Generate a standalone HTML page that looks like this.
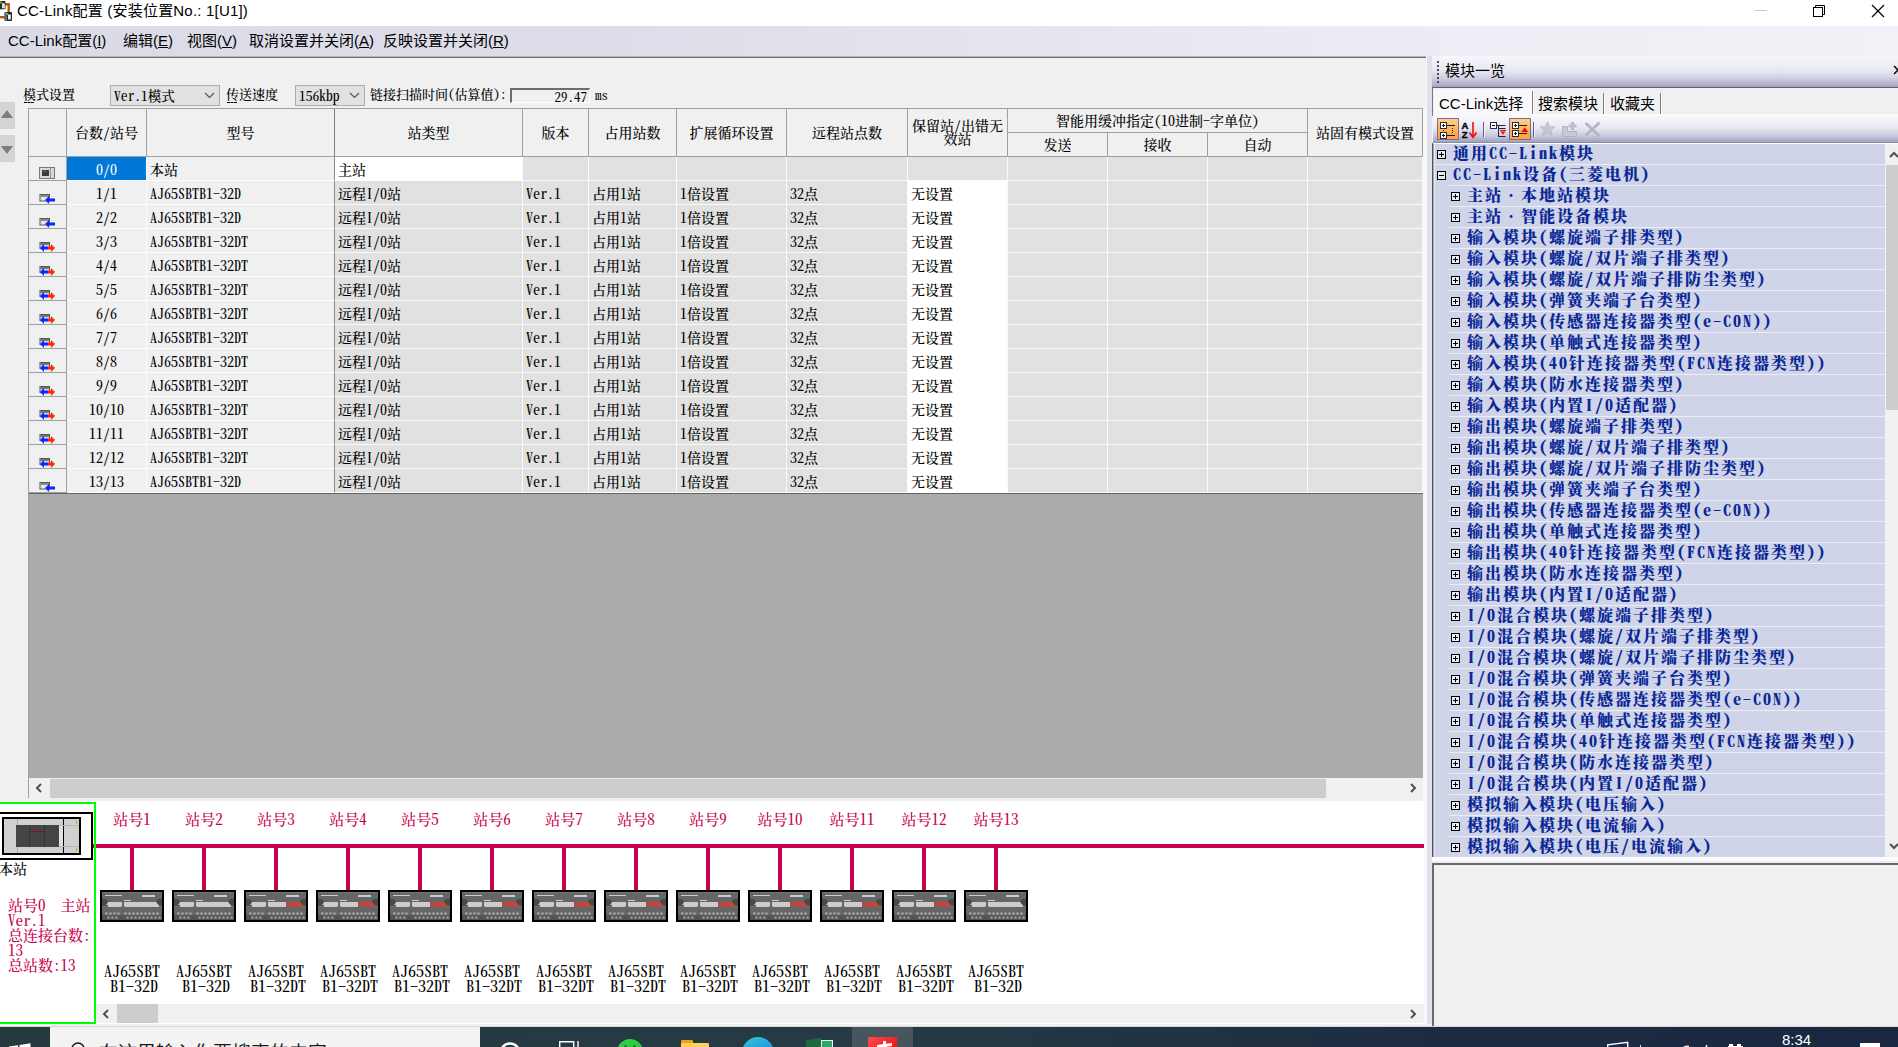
<!DOCTYPE html><html lang="zh-CN"><head><meta charset="utf-8"><title>CC-Link配置</title><style>
*{box-sizing:border-box;margin:0;padding:0}
html,body{width:1898px;height:1047px;overflow:hidden;background:#f0f0f0}
body{position:relative;font-family:"Liberation Sans","Noto Sans CJK SC",sans-serif;font-size:15px;color:#000}
.a{position:absolute}
.ui{font-family:"Liberation Sans","Noto Sans CJK SC",sans-serif;font-size:15px;white-space:nowrap}
.s{font-family:"Noto Serif CJK SC","Liberation Serif",serif;font-feature-settings:"hwid";white-space:nowrap;font-weight:500}
u{text-decoration:underline;text-underline-offset:1px}
u.d{text-decoration:none;position:relative;display:inline-block;line-height:16px;vertical-align:top}
u.d:after{content:"";position:absolute;left:1px;top:16px;width:10px;height:0;border-top:1px dashed #000}
#title{left:0;top:0;width:1898px;height:26px;background:#fff}
#menu{left:0;top:26px;width:1898px;height:30px;background:linear-gradient(90deg,#dbdbe8 0,#dddde9 600px,#ececf4 1400px,#f1f1f7 1898px)}
#menu span{position:absolute;top:5px;line-height:20px}
#lp{left:0;top:56px;width:1426px;height:971px;background:#f0f0f0}
.cmb{height:21px;border:1px solid #adadad;background:#e1e1e1;font-size:13.5px;line-height:19px;padding-left:3px}
.lbl{font-size:13px;line-height:16px}
.hc{position:absolute;background:#f0f0f0;border-right:1px solid #a0a0a0;border-bottom:1px solid #a0a0a0;font-size:14px;text-align:center;display:flex;align-items:center;justify-content:center;padding-bottom:2px}
.row{position:absolute;left:28px;width:1395px;height:24px;font-size:14px;line-height:25px}
.c{position:absolute;top:0;height:24px;border-bottom:1px solid #fafafa;border-right:1px solid #fafafa;background:#e1e1e1;padding-left:3px;overflow:hidden}
.c.f{background:#f0f0f0;border-color:#fbfbfb}
.c.w{background:#fff;border-bottom-color:#fff}
.c.i{background:#f0f0f0;border-color:#a0a0a0;border-left:1px solid #a0a0a0;padding:0}
.c.sel{background:#0078d7;color:#fff;border-color:#fbfbfb}
.c.k{border-right-color:#8c8c8c}
.cen{text-align:center;padding-left:0}
.tr{position:absolute;left:0;width:450px;height:21px;font-size:16px;font-weight:900;letter-spacing:2px;color:#0a2896;line-height:20px}
.tr b{position:absolute;top:6px;width:9px;height:9px;border:1px solid #000;background:#e8eaf6}
.tr b:before{content:"";position:absolute;left:1px;top:3px;width:5px;height:1px;background:#000}
.tr b.p:after{content:"";position:absolute;left:3px;top:1px;width:1px;height:5px;background:#000}
.tr i{position:absolute;top:-1px;font-style:normal}
.tr i em{font-style:normal;font-weight:400}
.tr s{position:absolute;top:-1px;right:0;height:1px;background:#eceef5}
.st{position:absolute;top:811px;width:72px;text-align:center;font-size:15px;line-height:15px;color:#c8004f}
.mn{position:absolute;top:963px;width:72px;text-align:center;font-size:16px;line-height:15px;color:#000;white-space:pre}
.mn span{position:relative;left:2px}
.dr{position:absolute;top:848px;width:4px;height:42px;background:#c80050}
</style></head><body>
<div id="title" class="a">
<svg class="a" style="left:0;top:0" width="14" height="24" viewBox="0 0 14 24"><path d="M5 4.200H8.700V12.500" fill="none" stroke="#b85a0a" stroke-width="2.400"/><path d="M0 17.200H5" stroke="#b85a0a" stroke-width="2.400"/><rect x="-1" y="1" width="6.500" height="8.200" rx=".8" fill="#2a2a2a"/><rect x="2" y="3.300" width="2.800" height="5" fill="#e8e8e8"/><rect x="0" y="1.500" width="1.800" height="2" fill="#5cd01a"/><rect x="4.600" y="12" width="7.400" height="9" rx=".8" fill="#2a2a2a"/><rect x="4.600" y="12" width="2.400" height="9" fill="#6a6a6a"/><rect x="8" y="14.500" width="2.800" height="5" fill="#f4f4f4"/><rect x="6.800" y="13" width="1.200" height="2" fill="#5cd01a"/></svg>
<div class="a ui" style="left:17px;top:0px;line-height:21px;letter-spacing:.2px">CC-Link配置 (安装位置No.: 1[U1])</div>
<div class="a" style="left:1755px;top:10px;width:12px;height:1px;background:#c8c8c8"></div>
<svg class="a" style="left:1812px;top:4px" width="14" height="14" viewBox="0 0 14 14"><path d="M3.500 3.500V1.500h9v9h-2" fill="none" stroke="#000" stroke-width="1"/><rect x="1.5" y="3.5" width="9" height="9" fill="none" stroke="#000" stroke-width="1"/></svg>
<svg class="a" style="left:1871px;top:4px" width="14" height="14" viewBox="0 0 14 14"><path d="M1 1l12 12M13 1L1 13" stroke="#000" stroke-width="1.2" fill="none"/></svg>
</div>
<div id="menu" class="a ui">
<span style="left:8px">CC-Link配置(<u>I</u>)</span>
<span style="left:123px">编辑(<u>E</u>)</span>
<span style="left:187px">视图(<u>V</u>)</span>
<span style="left:249px">取消设置并关闭(<u>A</u>)</span>
<span style="left:383px">反映设置并关闭(<u>R</u>)</span>
</div>
<div id="lp" class="a"></div>
<div class="a" style="left:0;top:56px;width:1426px;height:1px;background:#b4b4b4"></div>
<div class="a" style="left:0;top:57px;width:1426px;height:1px;background:#6e6e6e"></div>
<div class="a" style="left:1426px;top:56px;width:1px;height:971px;background:#fafafa"></div>
<div class="a" style="left:1423px;top:108px;width:4px;height:918px;background:#f8f8f8"></div>
<div class="a" style="left:1427px;top:56px;width:5px;height:971px;background:#e0e0ec"></div>
<div class="a" style="left:0;top:102px;width:15px;height:27px;background:#d4d4d4"><svg width="15" height="27"><path d="M1 16l6-8 6 8z" fill="#7d7d7d"/></svg></div>
<div class="a" style="left:0;top:135px;width:15px;height:27px;background:#d4d4d4"><svg width="15" height="27"><path d="M1 11l6 8 6-8z" fill="#7d7d7d"/></svg></div>
<div class="a s lbl" style="left:23px;top:86px"><u class="d">模</u>式设置</div>
<div class="a s cmb" style="left:110px;top:85px;width:110px">Ver.1模式<svg class="a" style="right:4px;top:6px" width="11" height="7"><path d="M1 1l4.5 4.5L10 1" fill="none" stroke="#555" stroke-width="1.2"/></svg></div>
<div class="a s lbl" style="left:226px;top:86px"><u class="d">传</u>送速度</div>
<div class="a s cmb" style="left:295px;top:85px;width:70px">156kbp<svg class="a" style="right:4px;top:6px" width="11" height="7"><path d="M1 1l4.5 4.5L10 1" fill="none" stroke="#555" stroke-width="1.2"/></svg></div>
<div class="a s lbl" style="left:370px;top:86px">链接扫描时间(估算值):</div>
<div class="a s" style="left:510px;top:88px;width:80px;height:15px;border:1px solid #fff;border-top:2px solid #6d6d6d;border-left:2px solid #6d6d6d;font-size:13px;line-height:14px;text-align:right;padding-right:2px">29.47</div>
<div class="a s lbl" style="left:595px;top:87px">ms</div>
<div class="a s" style="left:28px;top:108px;width:1395px;height:49px;background:#a0a0a0">
<div class="hc" style="left:1px;top:1px;width:38px;height:48px;"></div>
<div class="hc" style="left:39px;top:1px;width:80px;height:48px;">台数/站号</div>
<div class="hc" style="left:119px;top:1px;width:188px;height:48px;border-right-color:#808080">型号</div>
<div class="hc" style="left:307px;top:1px;width:188px;height:48px;">站类型</div>
<div class="hc" style="left:495px;top:1px;width:66px;height:48px;">版本</div>
<div class="hc" style="left:561px;top:1px;width:88px;height:48px;">占用站数</div>
<div class="hc" style="left:649px;top:1px;width:110px;height:48px;">扩展循环设置</div>
<div class="hc" style="left:759px;top:1px;width:121px;height:48px;">远程站点数</div>
<div class="hc" style="left:880px;top:1px;width:100px;height:48px;line-height:13px;white-space:normal">保留站/出错无<br>效站</div>
<div class="hc" style="left:980px;top:1px;width:300px;height:24px;">智能用缓冲指定(10进制-字单位)</div>
<div class="hc" style="left:980px;top:25px;width:100px;height:24px;">发送</div>
<div class="hc" style="left:1080px;top:25px;width:100px;height:24px;">接收</div>
<div class="hc" style="left:1180px;top:25px;width:100px;height:24px;">自动</div>
<div class="hc" style="left:1280px;top:1px;width:115px;height:48px;">站固有模式设置</div>
</div>
<div class="row s" style="top:157px">
<div class="c i" style="left:0;width:39px"><svg class="a" style="left:10px;top:10px" width="16" height="12"><rect x=".5" y=".5" width="15" height="11" fill="#d8d8d4" stroke="#777"/><rect x="3" y="3" width="7" height="6" fill="#3a3a3a"/><rect x="4" y="4" width="3" height="1" fill="#e03050"/><rect x="11" y="1" width="1" height="10" fill="#999"/></svg></div>
<div class="c sel cen" style="left:39px;width:80px">0/0</div>
<div class="c f k" style="left:119px;width:188px">本站</div>
<div class="c w" style="left:307px;width:188px">主站</div>
<div class="c " style="left:495px;width:66px"></div>
<div class="c " style="left:561px;width:88px"></div>
<div class="c " style="left:649px;width:110px"></div>
<div class="c " style="left:759px;width:121px"></div>
<div class="c " style="left:880px;width:100px"></div>
<div class="c " style="left:980px;width:100px"></div>
<div class="c " style="left:1080px;width:100px"></div>
<div class="c " style="left:1180px;width:100px"></div>
<div class="c " style="left:1280px;width:115px"></div>
</div>
<div class="row s" style="top:181px">
<div class="c i" style="left:0;width:39px"><svg class="a" style="left:10px;top:13px" width="17" height="10"><rect x="1" y=".5" width="9.5" height="6.5" fill="#e8e8e8" stroke="#555"/><rect x="1.5" y="1" width="8.5" height="2" fill="#888"/><path d="M6 6l4-4v2.6h6v2.8h-6V10z" fill="#0a28ff"/></svg></div>
<div class="c f cen" style="left:39px;width:80px">1/1</div>
<div class="c f k" style="left:119px;width:188px">AJ65SBTB1-32D</div>
<div class="c " style="left:307px;width:188px">远程I/O站</div>
<div class="c " style="left:495px;width:66px">Ver.1</div>
<div class="c " style="left:561px;width:88px">占用1站</div>
<div class="c " style="left:649px;width:110px">1倍设置</div>
<div class="c " style="left:759px;width:121px">32点</div>
<div class="c w" style="left:880px;width:100px">无设置</div>
<div class="c " style="left:980px;width:100px"></div>
<div class="c " style="left:1080px;width:100px"></div>
<div class="c " style="left:1180px;width:100px"></div>
<div class="c " style="left:1280px;width:115px"></div>
</div>
<div class="row s" style="top:205px">
<div class="c i" style="left:0;width:39px"><svg class="a" style="left:10px;top:13px" width="17" height="10"><rect x="1" y=".5" width="9.5" height="6.5" fill="#e8e8e8" stroke="#555"/><rect x="1.5" y="1" width="8.5" height="2" fill="#888"/><path d="M6 6l4-4v2.6h6v2.8h-6V10z" fill="#0a28ff"/></svg></div>
<div class="c f cen" style="left:39px;width:80px">2/2</div>
<div class="c f k" style="left:119px;width:188px">AJ65SBTB1-32D</div>
<div class="c " style="left:307px;width:188px">远程I/O站</div>
<div class="c " style="left:495px;width:66px">Ver.1</div>
<div class="c " style="left:561px;width:88px">占用1站</div>
<div class="c " style="left:649px;width:110px">1倍设置</div>
<div class="c " style="left:759px;width:121px">32点</div>
<div class="c w" style="left:880px;width:100px">无设置</div>
<div class="c " style="left:980px;width:100px"></div>
<div class="c " style="left:1080px;width:100px"></div>
<div class="c " style="left:1180px;width:100px"></div>
<div class="c " style="left:1280px;width:115px"></div>
</div>
<div class="row s" style="top:229px">
<div class="c i" style="left:0;width:39px"><svg class="a" style="left:10px;top:13px" width="17" height="10"><rect x="1" y=".5" width="9.5" height="6" fill="#ddd" stroke="#555"/><rect x="1.5" y="1" width="8.5" height="2" fill="#777"/><path d="M1 6l4-4v2.6h4v2.8H5V10z" fill="#0a28ff"/><path d="M16 6l-4-4v2.6H9v2.8h3V10z" fill="#ff2a00"/></svg></div>
<div class="c f cen" style="left:39px;width:80px">3/3</div>
<div class="c f k" style="left:119px;width:188px">AJ65SBTB1-32DT</div>
<div class="c " style="left:307px;width:188px">远程I/O站</div>
<div class="c " style="left:495px;width:66px">Ver.1</div>
<div class="c " style="left:561px;width:88px">占用1站</div>
<div class="c " style="left:649px;width:110px">1倍设置</div>
<div class="c " style="left:759px;width:121px">32点</div>
<div class="c w" style="left:880px;width:100px">无设置</div>
<div class="c " style="left:980px;width:100px"></div>
<div class="c " style="left:1080px;width:100px"></div>
<div class="c " style="left:1180px;width:100px"></div>
<div class="c " style="left:1280px;width:115px"></div>
</div>
<div class="row s" style="top:253px">
<div class="c i" style="left:0;width:39px"><svg class="a" style="left:10px;top:13px" width="17" height="10"><rect x="1" y=".5" width="9.5" height="6" fill="#ddd" stroke="#555"/><rect x="1.5" y="1" width="8.5" height="2" fill="#777"/><path d="M1 6l4-4v2.6h4v2.8H5V10z" fill="#0a28ff"/><path d="M16 6l-4-4v2.6H9v2.8h3V10z" fill="#ff2a00"/></svg></div>
<div class="c f cen" style="left:39px;width:80px">4/4</div>
<div class="c f k" style="left:119px;width:188px">AJ65SBTB1-32DT</div>
<div class="c " style="left:307px;width:188px">远程I/O站</div>
<div class="c " style="left:495px;width:66px">Ver.1</div>
<div class="c " style="left:561px;width:88px">占用1站</div>
<div class="c " style="left:649px;width:110px">1倍设置</div>
<div class="c " style="left:759px;width:121px">32点</div>
<div class="c w" style="left:880px;width:100px">无设置</div>
<div class="c " style="left:980px;width:100px"></div>
<div class="c " style="left:1080px;width:100px"></div>
<div class="c " style="left:1180px;width:100px"></div>
<div class="c " style="left:1280px;width:115px"></div>
</div>
<div class="row s" style="top:277px">
<div class="c i" style="left:0;width:39px"><svg class="a" style="left:10px;top:13px" width="17" height="10"><rect x="1" y=".5" width="9.5" height="6" fill="#ddd" stroke="#555"/><rect x="1.5" y="1" width="8.5" height="2" fill="#777"/><path d="M1 6l4-4v2.6h4v2.8H5V10z" fill="#0a28ff"/><path d="M16 6l-4-4v2.6H9v2.8h3V10z" fill="#ff2a00"/></svg></div>
<div class="c f cen" style="left:39px;width:80px">5/5</div>
<div class="c f k" style="left:119px;width:188px">AJ65SBTB1-32DT</div>
<div class="c " style="left:307px;width:188px">远程I/O站</div>
<div class="c " style="left:495px;width:66px">Ver.1</div>
<div class="c " style="left:561px;width:88px">占用1站</div>
<div class="c " style="left:649px;width:110px">1倍设置</div>
<div class="c " style="left:759px;width:121px">32点</div>
<div class="c w" style="left:880px;width:100px">无设置</div>
<div class="c " style="left:980px;width:100px"></div>
<div class="c " style="left:1080px;width:100px"></div>
<div class="c " style="left:1180px;width:100px"></div>
<div class="c " style="left:1280px;width:115px"></div>
</div>
<div class="row s" style="top:301px">
<div class="c i" style="left:0;width:39px"><svg class="a" style="left:10px;top:13px" width="17" height="10"><rect x="1" y=".5" width="9.5" height="6" fill="#ddd" stroke="#555"/><rect x="1.5" y="1" width="8.5" height="2" fill="#777"/><path d="M1 6l4-4v2.6h4v2.8H5V10z" fill="#0a28ff"/><path d="M16 6l-4-4v2.6H9v2.8h3V10z" fill="#ff2a00"/></svg></div>
<div class="c f cen" style="left:39px;width:80px">6/6</div>
<div class="c f k" style="left:119px;width:188px">AJ65SBTB1-32DT</div>
<div class="c " style="left:307px;width:188px">远程I/O站</div>
<div class="c " style="left:495px;width:66px">Ver.1</div>
<div class="c " style="left:561px;width:88px">占用1站</div>
<div class="c " style="left:649px;width:110px">1倍设置</div>
<div class="c " style="left:759px;width:121px">32点</div>
<div class="c w" style="left:880px;width:100px">无设置</div>
<div class="c " style="left:980px;width:100px"></div>
<div class="c " style="left:1080px;width:100px"></div>
<div class="c " style="left:1180px;width:100px"></div>
<div class="c " style="left:1280px;width:115px"></div>
</div>
<div class="row s" style="top:325px">
<div class="c i" style="left:0;width:39px"><svg class="a" style="left:10px;top:13px" width="17" height="10"><rect x="1" y=".5" width="9.5" height="6" fill="#ddd" stroke="#555"/><rect x="1.5" y="1" width="8.5" height="2" fill="#777"/><path d="M1 6l4-4v2.6h4v2.8H5V10z" fill="#0a28ff"/><path d="M16 6l-4-4v2.6H9v2.8h3V10z" fill="#ff2a00"/></svg></div>
<div class="c f cen" style="left:39px;width:80px">7/7</div>
<div class="c f k" style="left:119px;width:188px">AJ65SBTB1-32DT</div>
<div class="c " style="left:307px;width:188px">远程I/O站</div>
<div class="c " style="left:495px;width:66px">Ver.1</div>
<div class="c " style="left:561px;width:88px">占用1站</div>
<div class="c " style="left:649px;width:110px">1倍设置</div>
<div class="c " style="left:759px;width:121px">32点</div>
<div class="c w" style="left:880px;width:100px">无设置</div>
<div class="c " style="left:980px;width:100px"></div>
<div class="c " style="left:1080px;width:100px"></div>
<div class="c " style="left:1180px;width:100px"></div>
<div class="c " style="left:1280px;width:115px"></div>
</div>
<div class="row s" style="top:349px">
<div class="c i" style="left:0;width:39px"><svg class="a" style="left:10px;top:13px" width="17" height="10"><rect x="1" y=".5" width="9.5" height="6" fill="#ddd" stroke="#555"/><rect x="1.5" y="1" width="8.5" height="2" fill="#777"/><path d="M1 6l4-4v2.6h4v2.8H5V10z" fill="#0a28ff"/><path d="M16 6l-4-4v2.6H9v2.8h3V10z" fill="#ff2a00"/></svg></div>
<div class="c f cen" style="left:39px;width:80px">8/8</div>
<div class="c f k" style="left:119px;width:188px">AJ65SBTB1-32DT</div>
<div class="c " style="left:307px;width:188px">远程I/O站</div>
<div class="c " style="left:495px;width:66px">Ver.1</div>
<div class="c " style="left:561px;width:88px">占用1站</div>
<div class="c " style="left:649px;width:110px">1倍设置</div>
<div class="c " style="left:759px;width:121px">32点</div>
<div class="c w" style="left:880px;width:100px">无设置</div>
<div class="c " style="left:980px;width:100px"></div>
<div class="c " style="left:1080px;width:100px"></div>
<div class="c " style="left:1180px;width:100px"></div>
<div class="c " style="left:1280px;width:115px"></div>
</div>
<div class="row s" style="top:373px">
<div class="c i" style="left:0;width:39px"><svg class="a" style="left:10px;top:13px" width="17" height="10"><rect x="1" y=".5" width="9.5" height="6" fill="#ddd" stroke="#555"/><rect x="1.5" y="1" width="8.5" height="2" fill="#777"/><path d="M1 6l4-4v2.6h4v2.8H5V10z" fill="#0a28ff"/><path d="M16 6l-4-4v2.6H9v2.8h3V10z" fill="#ff2a00"/></svg></div>
<div class="c f cen" style="left:39px;width:80px">9/9</div>
<div class="c f k" style="left:119px;width:188px">AJ65SBTB1-32DT</div>
<div class="c " style="left:307px;width:188px">远程I/O站</div>
<div class="c " style="left:495px;width:66px">Ver.1</div>
<div class="c " style="left:561px;width:88px">占用1站</div>
<div class="c " style="left:649px;width:110px">1倍设置</div>
<div class="c " style="left:759px;width:121px">32点</div>
<div class="c w" style="left:880px;width:100px">无设置</div>
<div class="c " style="left:980px;width:100px"></div>
<div class="c " style="left:1080px;width:100px"></div>
<div class="c " style="left:1180px;width:100px"></div>
<div class="c " style="left:1280px;width:115px"></div>
</div>
<div class="row s" style="top:397px">
<div class="c i" style="left:0;width:39px"><svg class="a" style="left:10px;top:13px" width="17" height="10"><rect x="1" y=".5" width="9.5" height="6" fill="#ddd" stroke="#555"/><rect x="1.5" y="1" width="8.5" height="2" fill="#777"/><path d="M1 6l4-4v2.6h4v2.8H5V10z" fill="#0a28ff"/><path d="M16 6l-4-4v2.6H9v2.8h3V10z" fill="#ff2a00"/></svg></div>
<div class="c f cen" style="left:39px;width:80px">10/10</div>
<div class="c f k" style="left:119px;width:188px">AJ65SBTB1-32DT</div>
<div class="c " style="left:307px;width:188px">远程I/O站</div>
<div class="c " style="left:495px;width:66px">Ver.1</div>
<div class="c " style="left:561px;width:88px">占用1站</div>
<div class="c " style="left:649px;width:110px">1倍设置</div>
<div class="c " style="left:759px;width:121px">32点</div>
<div class="c w" style="left:880px;width:100px">无设置</div>
<div class="c " style="left:980px;width:100px"></div>
<div class="c " style="left:1080px;width:100px"></div>
<div class="c " style="left:1180px;width:100px"></div>
<div class="c " style="left:1280px;width:115px"></div>
</div>
<div class="row s" style="top:421px">
<div class="c i" style="left:0;width:39px"><svg class="a" style="left:10px;top:13px" width="17" height="10"><rect x="1" y=".5" width="9.5" height="6" fill="#ddd" stroke="#555"/><rect x="1.5" y="1" width="8.5" height="2" fill="#777"/><path d="M1 6l4-4v2.6h4v2.8H5V10z" fill="#0a28ff"/><path d="M16 6l-4-4v2.6H9v2.8h3V10z" fill="#ff2a00"/></svg></div>
<div class="c f cen" style="left:39px;width:80px">11/11</div>
<div class="c f k" style="left:119px;width:188px">AJ65SBTB1-32DT</div>
<div class="c " style="left:307px;width:188px">远程I/O站</div>
<div class="c " style="left:495px;width:66px">Ver.1</div>
<div class="c " style="left:561px;width:88px">占用1站</div>
<div class="c " style="left:649px;width:110px">1倍设置</div>
<div class="c " style="left:759px;width:121px">32点</div>
<div class="c w" style="left:880px;width:100px">无设置</div>
<div class="c " style="left:980px;width:100px"></div>
<div class="c " style="left:1080px;width:100px"></div>
<div class="c " style="left:1180px;width:100px"></div>
<div class="c " style="left:1280px;width:115px"></div>
</div>
<div class="row s" style="top:445px">
<div class="c i" style="left:0;width:39px"><svg class="a" style="left:10px;top:13px" width="17" height="10"><rect x="1" y=".5" width="9.5" height="6" fill="#ddd" stroke="#555"/><rect x="1.5" y="1" width="8.5" height="2" fill="#777"/><path d="M1 6l4-4v2.6h4v2.8H5V10z" fill="#0a28ff"/><path d="M16 6l-4-4v2.6H9v2.8h3V10z" fill="#ff2a00"/></svg></div>
<div class="c f cen" style="left:39px;width:80px">12/12</div>
<div class="c f k" style="left:119px;width:188px">AJ65SBTB1-32DT</div>
<div class="c " style="left:307px;width:188px">远程I/O站</div>
<div class="c " style="left:495px;width:66px">Ver.1</div>
<div class="c " style="left:561px;width:88px">占用1站</div>
<div class="c " style="left:649px;width:110px">1倍设置</div>
<div class="c " style="left:759px;width:121px">32点</div>
<div class="c w" style="left:880px;width:100px">无设置</div>
<div class="c " style="left:980px;width:100px"></div>
<div class="c " style="left:1080px;width:100px"></div>
<div class="c " style="left:1180px;width:100px"></div>
<div class="c " style="left:1280px;width:115px"></div>
</div>
<div class="row s" style="top:469px">
<div class="c i" style="left:0;width:39px"><svg class="a" style="left:10px;top:13px" width="17" height="10"><rect x="1" y=".5" width="9.5" height="6.5" fill="#e8e8e8" stroke="#555"/><rect x="1.5" y="1" width="8.5" height="2" fill="#888"/><path d="M6 6l4-4v2.6h6v2.8h-6V10z" fill="#0a28ff"/></svg></div>
<div class="c f cen" style="left:39px;width:80px">13/13</div>
<div class="c f k" style="left:119px;width:188px">AJ65SBTB1-32D</div>
<div class="c " style="left:307px;width:188px">远程I/O站</div>
<div class="c " style="left:495px;width:66px">Ver.1</div>
<div class="c " style="left:561px;width:88px">占用1站</div>
<div class="c " style="left:649px;width:110px">1倍设置</div>
<div class="c " style="left:759px;width:121px">32点</div>
<div class="c w" style="left:880px;width:100px">无设置</div>
<div class="c " style="left:980px;width:100px"></div>
<div class="c " style="left:1080px;width:100px"></div>
<div class="c " style="left:1180px;width:100px"></div>
<div class="c " style="left:1280px;width:115px"></div>
</div>
<div class="a" style="left:28px;top:493px;width:1395px;height:285px;background:#ababab;border-top:1px solid #646464"></div>
<div class="a" style="left:28px;top:108px;width:1px;height:690px;background:#a0a0a0"></div>
<div class="a" style="left:29px;top:778px;width:1394px;height:20px;background:#f0f0f0"><div class="a" style="left:21px;top:1px;width:1276px;height:19px;background:#cdcdcd"></div><svg class="a" style="left:6px;top:5px" width="8" height="10"><path d="M6 1L2 5l4 4" fill="none" stroke="#505050" stroke-width="2"/></svg><svg class="a" style="left:1380px;top:5px" width="8" height="10"><path d="M2 1l4 4-4 4" fill="none" stroke="#505050" stroke-width="2"/></svg></div>
<div class="a" style="left:0;top:801px;width:1424px;height:223px;background:#fff"></div>
<div class="a" style="left:93px;top:844px;width:1331px;height:4px;background:#c80050"></div>
<div class="a" style="left:0;top:802px;width:96px;height:222px;border:2px solid #00ff00;border-left:0"></div>
<svg class="a" style="left:0;top:812px" width="93" height="48" viewBox="0 0 93 48"><rect x="-1" y="1" width="93" height="46" fill="#fff" stroke="#000" stroke-width="2"/><rect x="3" y="6" width="77" height="36" fill="#d0d0d0" stroke="#000" stroke-width="2"/><rect x="16" y="13" width="43" height="22" fill="#444"/><rect x="29" y="13" width="1" height="22" fill="#333"/><rect x="44" y="13" width="1" height="22" fill="#333"/><rect x="30" y="19" width="14" height="1" fill="#8e1024"/><rect x="59" y="13" width="4" height="22" fill="#e2e2e2"/><rect x="17" y="7" width="1" height="6" fill="#aaa"/><rect x="17" y="35" width="1" height="6" fill="#aaa"/><rect x="63" y="7" width="1" height="34" fill="#000"/><rect x="59" y="13" width="20" height="1" fill="#b4b4b4"/><rect x="59" y="34" width="20" height="1" fill="#b4b4b4"/><rect x="76" y="8" width="1" height="4" fill="#b8b830"/><rect x="76" y="15" width="1" height="1" fill="#b8b830"/><rect x="76" y="36" width="1" height="4" fill="#b8b830"/></svg>
<div class="a s" style="left:-1px;top:860px;font-size:14px;line-height:16px">本站</div>
<div class="a s" style="left:8px;top:897px;font-size:15px;line-height:15px;color:#c8004f;white-space:pre">站号0  主站
Ver.1
总连接台数:
13
总站数:13</div>
<div class="st s" style="left:96px">站号1</div>
<div class="dr" style="left:130px"></div>
<div class="a" style="left:100px;top:890px;width:64px;height:32px"><svg width="64" height="32" viewBox="0 0 64 32"><rect x="1" y="1" width="62" height="30" fill="#666" stroke="#000" stroke-width="2"/><rect x="2" y="2" width="60" height="1" fill="#787878"/><rect x="2" y="25" width="60" height="5" fill="#535353"/><rect x="5" y="5" width="17" height="1" fill="#cdcdcd"/><rect x="42" y="5" width="13" height="2" fill="#cbcbcb"/><rect x="24" y="10" width="7" height="1" fill="#cdcdcd"/><path d="M2 9.500a3.200 3.200 0 0 1 0 6z" fill="#444"/><path d="M2 9h2.500a3.200 3.200 0 0 1 0 6.400H2z" fill="#484848"/><path d="M62 9h-2.500a3.200 3.200 0 0 0 0 6.400H62z" fill="#484848"/><path d="M8.500 12H22v4l-1 1H8v-2l-2-.5z" fill="#cbcbcb"/><path d="M24 12h32l3 3.500v1.500H25l-1-1z" fill="#cbcbcb"/><circle cx="6.4" cy="23.500" r="1.500" fill="#9a9a9a"/><circle cx="10.4" cy="23.500" r="1.500" fill="#9a9a9a"/><circle cx="14.5" cy="23.500" r="1.500" fill="#9a9a9a"/><circle cx="18.5" cy="23.500" r="1.500" fill="#9a9a9a"/><circle cx="25.5" cy="23.500" r="1.500" fill="#9a9a9a"/><circle cx="29.5" cy="23.500" r="1.500" fill="#9a9a9a"/><circle cx="33.5" cy="23.500" r="1.500" fill="#9a9a9a"/><circle cx="37.5" cy="23.500" r="1.500" fill="#9a9a9a"/><circle cx="41.5" cy="23.500" r="1.500" fill="#9a9a9a"/><circle cx="45.5" cy="23.500" r="1.500" fill="#9a9a9a"/><circle cx="49.5" cy="23.500" r="1.500" fill="#9a9a9a"/><circle cx="53.5" cy="23.500" r="1.500" fill="#9a9a9a"/><circle cx="57.5" cy="23.500" r="1.500" fill="#9a9a9a"/><circle cx="8.5" cy="27.500" r="1.500" fill="#8c8c8c"/><circle cx="12.5" cy="27.500" r="1.500" fill="#8c8c8c"/><circle cx="16.5" cy="27.500" r="1.500" fill="#8c8c8c"/><circle cx="27.5" cy="27.500" r="1.500" fill="#8c8c8c"/><circle cx="31.5" cy="27.500" r="1.500" fill="#8c8c8c"/><circle cx="35.5" cy="27.500" r="1.500" fill="#8c8c8c"/><circle cx="39.5" cy="27.500" r="1.500" fill="#8c8c8c"/><circle cx="43.5" cy="27.500" r="1.500" fill="#8c8c8c"/><circle cx="47.5" cy="27.500" r="1.500" fill="#8c8c8c"/><circle cx="51.5" cy="27.500" r="1.500" fill="#8c8c8c"/><circle cx="55.5" cy="27.500" r="1.500" fill="#8c8c8c"/><circle cx="59.5" cy="27.500" r="1.500" fill="#8c8c8c"/></svg></div>
<div class="mn s" style="left:96px">AJ65SBT
<span>B1-32D</span></div>
<div class="st s" style="left:168px">站号2</div>
<div class="dr" style="left:202px"></div>
<div class="a" style="left:172px;top:890px;width:64px;height:32px"><svg width="64" height="32" viewBox="0 0 64 32"><rect x="1" y="1" width="62" height="30" fill="#666" stroke="#000" stroke-width="2"/><rect x="2" y="2" width="60" height="1" fill="#787878"/><rect x="2" y="25" width="60" height="5" fill="#535353"/><rect x="5" y="5" width="17" height="1" fill="#cdcdcd"/><rect x="42" y="5" width="13" height="2" fill="#cbcbcb"/><rect x="24" y="10" width="7" height="1" fill="#cdcdcd"/><path d="M2 9.500a3.200 3.200 0 0 1 0 6z" fill="#444"/><path d="M2 9h2.500a3.200 3.200 0 0 1 0 6.400H2z" fill="#484848"/><path d="M62 9h-2.500a3.200 3.200 0 0 0 0 6.400H62z" fill="#484848"/><path d="M8.500 12H22v4l-1 1H8v-2l-2-.5z" fill="#cbcbcb"/><path d="M24 12h32l3 3.500v1.500H25l-1-1z" fill="#cbcbcb"/><circle cx="6.4" cy="23.500" r="1.500" fill="#9a9a9a"/><circle cx="10.4" cy="23.500" r="1.500" fill="#9a9a9a"/><circle cx="14.5" cy="23.500" r="1.500" fill="#9a9a9a"/><circle cx="18.5" cy="23.500" r="1.500" fill="#9a9a9a"/><circle cx="25.5" cy="23.500" r="1.500" fill="#9a9a9a"/><circle cx="29.5" cy="23.500" r="1.500" fill="#9a9a9a"/><circle cx="33.5" cy="23.500" r="1.500" fill="#9a9a9a"/><circle cx="37.5" cy="23.500" r="1.500" fill="#9a9a9a"/><circle cx="41.5" cy="23.500" r="1.500" fill="#9a9a9a"/><circle cx="45.5" cy="23.500" r="1.500" fill="#9a9a9a"/><circle cx="49.5" cy="23.500" r="1.500" fill="#9a9a9a"/><circle cx="53.5" cy="23.500" r="1.500" fill="#9a9a9a"/><circle cx="57.5" cy="23.500" r="1.500" fill="#9a9a9a"/><circle cx="8.5" cy="27.500" r="1.500" fill="#8c8c8c"/><circle cx="12.5" cy="27.500" r="1.500" fill="#8c8c8c"/><circle cx="16.5" cy="27.500" r="1.500" fill="#8c8c8c"/><circle cx="27.5" cy="27.500" r="1.500" fill="#8c8c8c"/><circle cx="31.5" cy="27.500" r="1.500" fill="#8c8c8c"/><circle cx="35.5" cy="27.500" r="1.500" fill="#8c8c8c"/><circle cx="39.5" cy="27.500" r="1.500" fill="#8c8c8c"/><circle cx="43.5" cy="27.500" r="1.500" fill="#8c8c8c"/><circle cx="47.5" cy="27.500" r="1.500" fill="#8c8c8c"/><circle cx="51.5" cy="27.500" r="1.500" fill="#8c8c8c"/><circle cx="55.5" cy="27.500" r="1.500" fill="#8c8c8c"/><circle cx="59.5" cy="27.500" r="1.500" fill="#8c8c8c"/></svg></div>
<div class="mn s" style="left:168px">AJ65SBT
<span>B1-32D</span></div>
<div class="st s" style="left:240px">站号3</div>
<div class="dr" style="left:274px"></div>
<div class="a" style="left:244px;top:890px;width:64px;height:32px"><svg width="64" height="32" viewBox="0 0 64 32"><rect x="1" y="1" width="62" height="30" fill="#666" stroke="#000" stroke-width="2"/><rect x="2" y="2" width="60" height="1" fill="#787878"/><rect x="2" y="25" width="60" height="5" fill="#535353"/><rect x="5" y="5" width="17" height="1" fill="#cdcdcd"/><rect x="42" y="5" width="13" height="2" fill="#cbcbcb"/><rect x="24" y="10" width="7" height="1" fill="#cdcdcd"/><path d="M2 9.500a3.200 3.200 0 0 1 0 6z" fill="#444"/><path d="M2 9h2.500a3.200 3.200 0 0 1 0 6.400H2z" fill="#484848"/><path d="M62 9h-2.500a3.200 3.200 0 0 0 0 6.400H62z" fill="#484848"/><path d="M8.500 12H22v4l-1 1H8v-2l-2-.5z" fill="#cbcbcb"/><path d="M24 12h18v5H25l-1-1z" fill="#cbcbcb"/><path d="M42 12h14l3 3.500v1.500H45v-1.800h-3z" fill="#c0453a"/><circle cx="6.4" cy="23.500" r="1.500" fill="#9a9a9a"/><circle cx="10.4" cy="23.500" r="1.500" fill="#9a9a9a"/><circle cx="14.5" cy="23.500" r="1.500" fill="#9a9a9a"/><circle cx="18.5" cy="23.500" r="1.500" fill="#9a9a9a"/><circle cx="25.5" cy="23.500" r="1.500" fill="#9a9a9a"/><circle cx="29.5" cy="23.500" r="1.500" fill="#9a9a9a"/><circle cx="33.5" cy="23.500" r="1.500" fill="#9a9a9a"/><circle cx="37.5" cy="23.500" r="1.500" fill="#9a9a9a"/><circle cx="41.5" cy="23.500" r="1.500" fill="#9a9a9a"/><circle cx="45.5" cy="23.500" r="1.500" fill="#9a9a9a"/><circle cx="49.5" cy="23.500" r="1.500" fill="#9a9a9a"/><circle cx="53.5" cy="23.500" r="1.500" fill="#9a9a9a"/><circle cx="57.5" cy="23.500" r="1.500" fill="#9a9a9a"/><circle cx="8.5" cy="27.500" r="1.500" fill="#8c8c8c"/><circle cx="12.5" cy="27.500" r="1.500" fill="#8c8c8c"/><circle cx="16.5" cy="27.500" r="1.500" fill="#8c8c8c"/><circle cx="27.5" cy="27.500" r="1.500" fill="#8c8c8c"/><circle cx="31.5" cy="27.500" r="1.500" fill="#8c8c8c"/><circle cx="35.5" cy="27.500" r="1.500" fill="#8c8c8c"/><circle cx="39.5" cy="27.500" r="1.500" fill="#8c8c8c"/><circle cx="43.5" cy="27.500" r="1.500" fill="#8c8c8c"/><circle cx="47.5" cy="27.500" r="1.500" fill="#8c8c8c"/><circle cx="51.5" cy="27.500" r="1.500" fill="#8c8c8c"/><circle cx="55.5" cy="27.500" r="1.500" fill="#8c8c8c"/><circle cx="59.5" cy="27.500" r="1.500" fill="#8c8c8c"/></svg></div>
<div class="mn s" style="left:240px">AJ65SBT
<span>B1-32DT</span></div>
<div class="st s" style="left:312px">站号4</div>
<div class="dr" style="left:346px"></div>
<div class="a" style="left:316px;top:890px;width:64px;height:32px"><svg width="64" height="32" viewBox="0 0 64 32"><rect x="1" y="1" width="62" height="30" fill="#666" stroke="#000" stroke-width="2"/><rect x="2" y="2" width="60" height="1" fill="#787878"/><rect x="2" y="25" width="60" height="5" fill="#535353"/><rect x="5" y="5" width="17" height="1" fill="#cdcdcd"/><rect x="42" y="5" width="13" height="2" fill="#cbcbcb"/><rect x="24" y="10" width="7" height="1" fill="#cdcdcd"/><path d="M2 9.500a3.200 3.200 0 0 1 0 6z" fill="#444"/><path d="M2 9h2.500a3.200 3.200 0 0 1 0 6.400H2z" fill="#484848"/><path d="M62 9h-2.500a3.200 3.200 0 0 0 0 6.400H62z" fill="#484848"/><path d="M8.500 12H22v4l-1 1H8v-2l-2-.5z" fill="#cbcbcb"/><path d="M24 12h18v5H25l-1-1z" fill="#cbcbcb"/><path d="M42 12h14l3 3.500v1.500H45v-1.800h-3z" fill="#c0453a"/><circle cx="6.4" cy="23.500" r="1.500" fill="#9a9a9a"/><circle cx="10.4" cy="23.500" r="1.500" fill="#9a9a9a"/><circle cx="14.5" cy="23.500" r="1.500" fill="#9a9a9a"/><circle cx="18.5" cy="23.500" r="1.500" fill="#9a9a9a"/><circle cx="25.5" cy="23.500" r="1.500" fill="#9a9a9a"/><circle cx="29.5" cy="23.500" r="1.500" fill="#9a9a9a"/><circle cx="33.5" cy="23.500" r="1.500" fill="#9a9a9a"/><circle cx="37.5" cy="23.500" r="1.500" fill="#9a9a9a"/><circle cx="41.5" cy="23.500" r="1.500" fill="#9a9a9a"/><circle cx="45.5" cy="23.500" r="1.500" fill="#9a9a9a"/><circle cx="49.5" cy="23.500" r="1.500" fill="#9a9a9a"/><circle cx="53.5" cy="23.500" r="1.500" fill="#9a9a9a"/><circle cx="57.5" cy="23.500" r="1.500" fill="#9a9a9a"/><circle cx="8.5" cy="27.500" r="1.500" fill="#8c8c8c"/><circle cx="12.5" cy="27.500" r="1.500" fill="#8c8c8c"/><circle cx="16.5" cy="27.500" r="1.500" fill="#8c8c8c"/><circle cx="27.5" cy="27.500" r="1.500" fill="#8c8c8c"/><circle cx="31.5" cy="27.500" r="1.500" fill="#8c8c8c"/><circle cx="35.5" cy="27.500" r="1.500" fill="#8c8c8c"/><circle cx="39.5" cy="27.500" r="1.500" fill="#8c8c8c"/><circle cx="43.5" cy="27.500" r="1.500" fill="#8c8c8c"/><circle cx="47.5" cy="27.500" r="1.500" fill="#8c8c8c"/><circle cx="51.5" cy="27.500" r="1.500" fill="#8c8c8c"/><circle cx="55.5" cy="27.500" r="1.500" fill="#8c8c8c"/><circle cx="59.5" cy="27.500" r="1.500" fill="#8c8c8c"/></svg></div>
<div class="mn s" style="left:312px">AJ65SBT
<span>B1-32DT</span></div>
<div class="st s" style="left:384px">站号5</div>
<div class="dr" style="left:418px"></div>
<div class="a" style="left:388px;top:890px;width:64px;height:32px"><svg width="64" height="32" viewBox="0 0 64 32"><rect x="1" y="1" width="62" height="30" fill="#666" stroke="#000" stroke-width="2"/><rect x="2" y="2" width="60" height="1" fill="#787878"/><rect x="2" y="25" width="60" height="5" fill="#535353"/><rect x="5" y="5" width="17" height="1" fill="#cdcdcd"/><rect x="42" y="5" width="13" height="2" fill="#cbcbcb"/><rect x="24" y="10" width="7" height="1" fill="#cdcdcd"/><path d="M2 9.500a3.200 3.200 0 0 1 0 6z" fill="#444"/><path d="M2 9h2.500a3.200 3.200 0 0 1 0 6.400H2z" fill="#484848"/><path d="M62 9h-2.500a3.200 3.200 0 0 0 0 6.400H62z" fill="#484848"/><path d="M8.500 12H22v4l-1 1H8v-2l-2-.5z" fill="#cbcbcb"/><path d="M24 12h18v5H25l-1-1z" fill="#cbcbcb"/><path d="M42 12h14l3 3.500v1.500H45v-1.800h-3z" fill="#c0453a"/><circle cx="6.4" cy="23.500" r="1.500" fill="#9a9a9a"/><circle cx="10.4" cy="23.500" r="1.500" fill="#9a9a9a"/><circle cx="14.5" cy="23.500" r="1.500" fill="#9a9a9a"/><circle cx="18.5" cy="23.500" r="1.500" fill="#9a9a9a"/><circle cx="25.5" cy="23.500" r="1.500" fill="#9a9a9a"/><circle cx="29.5" cy="23.500" r="1.500" fill="#9a9a9a"/><circle cx="33.5" cy="23.500" r="1.500" fill="#9a9a9a"/><circle cx="37.5" cy="23.500" r="1.500" fill="#9a9a9a"/><circle cx="41.5" cy="23.500" r="1.500" fill="#9a9a9a"/><circle cx="45.5" cy="23.500" r="1.500" fill="#9a9a9a"/><circle cx="49.5" cy="23.500" r="1.500" fill="#9a9a9a"/><circle cx="53.5" cy="23.500" r="1.500" fill="#9a9a9a"/><circle cx="57.5" cy="23.500" r="1.500" fill="#9a9a9a"/><circle cx="8.5" cy="27.500" r="1.500" fill="#8c8c8c"/><circle cx="12.5" cy="27.500" r="1.500" fill="#8c8c8c"/><circle cx="16.5" cy="27.500" r="1.500" fill="#8c8c8c"/><circle cx="27.5" cy="27.500" r="1.500" fill="#8c8c8c"/><circle cx="31.5" cy="27.500" r="1.500" fill="#8c8c8c"/><circle cx="35.5" cy="27.500" r="1.500" fill="#8c8c8c"/><circle cx="39.5" cy="27.500" r="1.500" fill="#8c8c8c"/><circle cx="43.5" cy="27.500" r="1.500" fill="#8c8c8c"/><circle cx="47.5" cy="27.500" r="1.500" fill="#8c8c8c"/><circle cx="51.5" cy="27.500" r="1.500" fill="#8c8c8c"/><circle cx="55.5" cy="27.500" r="1.500" fill="#8c8c8c"/><circle cx="59.5" cy="27.500" r="1.500" fill="#8c8c8c"/></svg></div>
<div class="mn s" style="left:384px">AJ65SBT
<span>B1-32DT</span></div>
<div class="st s" style="left:456px">站号6</div>
<div class="dr" style="left:490px"></div>
<div class="a" style="left:460px;top:890px;width:64px;height:32px"><svg width="64" height="32" viewBox="0 0 64 32"><rect x="1" y="1" width="62" height="30" fill="#666" stroke="#000" stroke-width="2"/><rect x="2" y="2" width="60" height="1" fill="#787878"/><rect x="2" y="25" width="60" height="5" fill="#535353"/><rect x="5" y="5" width="17" height="1" fill="#cdcdcd"/><rect x="42" y="5" width="13" height="2" fill="#cbcbcb"/><rect x="24" y="10" width="7" height="1" fill="#cdcdcd"/><path d="M2 9.500a3.200 3.200 0 0 1 0 6z" fill="#444"/><path d="M2 9h2.500a3.200 3.200 0 0 1 0 6.400H2z" fill="#484848"/><path d="M62 9h-2.500a3.200 3.200 0 0 0 0 6.400H62z" fill="#484848"/><path d="M8.500 12H22v4l-1 1H8v-2l-2-.5z" fill="#cbcbcb"/><path d="M24 12h18v5H25l-1-1z" fill="#cbcbcb"/><path d="M42 12h14l3 3.500v1.500H45v-1.800h-3z" fill="#c0453a"/><circle cx="6.4" cy="23.500" r="1.500" fill="#9a9a9a"/><circle cx="10.4" cy="23.500" r="1.500" fill="#9a9a9a"/><circle cx="14.5" cy="23.500" r="1.500" fill="#9a9a9a"/><circle cx="18.5" cy="23.500" r="1.500" fill="#9a9a9a"/><circle cx="25.5" cy="23.500" r="1.500" fill="#9a9a9a"/><circle cx="29.5" cy="23.500" r="1.500" fill="#9a9a9a"/><circle cx="33.5" cy="23.500" r="1.500" fill="#9a9a9a"/><circle cx="37.5" cy="23.500" r="1.500" fill="#9a9a9a"/><circle cx="41.5" cy="23.500" r="1.500" fill="#9a9a9a"/><circle cx="45.5" cy="23.500" r="1.500" fill="#9a9a9a"/><circle cx="49.5" cy="23.500" r="1.500" fill="#9a9a9a"/><circle cx="53.5" cy="23.500" r="1.500" fill="#9a9a9a"/><circle cx="57.5" cy="23.500" r="1.500" fill="#9a9a9a"/><circle cx="8.5" cy="27.500" r="1.500" fill="#8c8c8c"/><circle cx="12.5" cy="27.500" r="1.500" fill="#8c8c8c"/><circle cx="16.5" cy="27.500" r="1.500" fill="#8c8c8c"/><circle cx="27.5" cy="27.500" r="1.500" fill="#8c8c8c"/><circle cx="31.5" cy="27.500" r="1.500" fill="#8c8c8c"/><circle cx="35.5" cy="27.500" r="1.500" fill="#8c8c8c"/><circle cx="39.5" cy="27.500" r="1.500" fill="#8c8c8c"/><circle cx="43.5" cy="27.500" r="1.500" fill="#8c8c8c"/><circle cx="47.5" cy="27.500" r="1.500" fill="#8c8c8c"/><circle cx="51.5" cy="27.500" r="1.500" fill="#8c8c8c"/><circle cx="55.5" cy="27.500" r="1.500" fill="#8c8c8c"/><circle cx="59.5" cy="27.500" r="1.500" fill="#8c8c8c"/></svg></div>
<div class="mn s" style="left:456px">AJ65SBT
<span>B1-32DT</span></div>
<div class="st s" style="left:528px">站号7</div>
<div class="dr" style="left:562px"></div>
<div class="a" style="left:532px;top:890px;width:64px;height:32px"><svg width="64" height="32" viewBox="0 0 64 32"><rect x="1" y="1" width="62" height="30" fill="#666" stroke="#000" stroke-width="2"/><rect x="2" y="2" width="60" height="1" fill="#787878"/><rect x="2" y="25" width="60" height="5" fill="#535353"/><rect x="5" y="5" width="17" height="1" fill="#cdcdcd"/><rect x="42" y="5" width="13" height="2" fill="#cbcbcb"/><rect x="24" y="10" width="7" height="1" fill="#cdcdcd"/><path d="M2 9.500a3.200 3.200 0 0 1 0 6z" fill="#444"/><path d="M2 9h2.500a3.200 3.200 0 0 1 0 6.400H2z" fill="#484848"/><path d="M62 9h-2.500a3.200 3.200 0 0 0 0 6.400H62z" fill="#484848"/><path d="M8.500 12H22v4l-1 1H8v-2l-2-.5z" fill="#cbcbcb"/><path d="M24 12h18v5H25l-1-1z" fill="#cbcbcb"/><path d="M42 12h14l3 3.500v1.500H45v-1.800h-3z" fill="#c0453a"/><circle cx="6.4" cy="23.500" r="1.500" fill="#9a9a9a"/><circle cx="10.4" cy="23.500" r="1.500" fill="#9a9a9a"/><circle cx="14.5" cy="23.500" r="1.500" fill="#9a9a9a"/><circle cx="18.5" cy="23.500" r="1.500" fill="#9a9a9a"/><circle cx="25.5" cy="23.500" r="1.500" fill="#9a9a9a"/><circle cx="29.5" cy="23.500" r="1.500" fill="#9a9a9a"/><circle cx="33.5" cy="23.500" r="1.500" fill="#9a9a9a"/><circle cx="37.5" cy="23.500" r="1.500" fill="#9a9a9a"/><circle cx="41.5" cy="23.500" r="1.500" fill="#9a9a9a"/><circle cx="45.5" cy="23.500" r="1.500" fill="#9a9a9a"/><circle cx="49.5" cy="23.500" r="1.500" fill="#9a9a9a"/><circle cx="53.5" cy="23.500" r="1.500" fill="#9a9a9a"/><circle cx="57.5" cy="23.500" r="1.500" fill="#9a9a9a"/><circle cx="8.5" cy="27.500" r="1.500" fill="#8c8c8c"/><circle cx="12.5" cy="27.500" r="1.500" fill="#8c8c8c"/><circle cx="16.5" cy="27.500" r="1.500" fill="#8c8c8c"/><circle cx="27.5" cy="27.500" r="1.500" fill="#8c8c8c"/><circle cx="31.5" cy="27.500" r="1.500" fill="#8c8c8c"/><circle cx="35.5" cy="27.500" r="1.500" fill="#8c8c8c"/><circle cx="39.5" cy="27.500" r="1.500" fill="#8c8c8c"/><circle cx="43.5" cy="27.500" r="1.500" fill="#8c8c8c"/><circle cx="47.5" cy="27.500" r="1.500" fill="#8c8c8c"/><circle cx="51.5" cy="27.500" r="1.500" fill="#8c8c8c"/><circle cx="55.5" cy="27.500" r="1.500" fill="#8c8c8c"/><circle cx="59.5" cy="27.500" r="1.500" fill="#8c8c8c"/></svg></div>
<div class="mn s" style="left:528px">AJ65SBT
<span>B1-32DT</span></div>
<div class="st s" style="left:600px">站号8</div>
<div class="dr" style="left:634px"></div>
<div class="a" style="left:604px;top:890px;width:64px;height:32px"><svg width="64" height="32" viewBox="0 0 64 32"><rect x="1" y="1" width="62" height="30" fill="#666" stroke="#000" stroke-width="2"/><rect x="2" y="2" width="60" height="1" fill="#787878"/><rect x="2" y="25" width="60" height="5" fill="#535353"/><rect x="5" y="5" width="17" height="1" fill="#cdcdcd"/><rect x="42" y="5" width="13" height="2" fill="#cbcbcb"/><rect x="24" y="10" width="7" height="1" fill="#cdcdcd"/><path d="M2 9.500a3.200 3.200 0 0 1 0 6z" fill="#444"/><path d="M2 9h2.500a3.200 3.200 0 0 1 0 6.400H2z" fill="#484848"/><path d="M62 9h-2.500a3.200 3.200 0 0 0 0 6.400H62z" fill="#484848"/><path d="M8.500 12H22v4l-1 1H8v-2l-2-.5z" fill="#cbcbcb"/><path d="M24 12h18v5H25l-1-1z" fill="#cbcbcb"/><path d="M42 12h14l3 3.500v1.500H45v-1.800h-3z" fill="#c0453a"/><circle cx="6.4" cy="23.500" r="1.500" fill="#9a9a9a"/><circle cx="10.4" cy="23.500" r="1.500" fill="#9a9a9a"/><circle cx="14.5" cy="23.500" r="1.500" fill="#9a9a9a"/><circle cx="18.5" cy="23.500" r="1.500" fill="#9a9a9a"/><circle cx="25.5" cy="23.500" r="1.500" fill="#9a9a9a"/><circle cx="29.5" cy="23.500" r="1.500" fill="#9a9a9a"/><circle cx="33.5" cy="23.500" r="1.500" fill="#9a9a9a"/><circle cx="37.5" cy="23.500" r="1.500" fill="#9a9a9a"/><circle cx="41.5" cy="23.500" r="1.500" fill="#9a9a9a"/><circle cx="45.5" cy="23.500" r="1.500" fill="#9a9a9a"/><circle cx="49.5" cy="23.500" r="1.500" fill="#9a9a9a"/><circle cx="53.5" cy="23.500" r="1.500" fill="#9a9a9a"/><circle cx="57.5" cy="23.500" r="1.500" fill="#9a9a9a"/><circle cx="8.5" cy="27.500" r="1.500" fill="#8c8c8c"/><circle cx="12.5" cy="27.500" r="1.500" fill="#8c8c8c"/><circle cx="16.5" cy="27.500" r="1.500" fill="#8c8c8c"/><circle cx="27.5" cy="27.500" r="1.500" fill="#8c8c8c"/><circle cx="31.5" cy="27.500" r="1.500" fill="#8c8c8c"/><circle cx="35.5" cy="27.500" r="1.500" fill="#8c8c8c"/><circle cx="39.5" cy="27.500" r="1.500" fill="#8c8c8c"/><circle cx="43.5" cy="27.500" r="1.500" fill="#8c8c8c"/><circle cx="47.5" cy="27.500" r="1.500" fill="#8c8c8c"/><circle cx="51.5" cy="27.500" r="1.500" fill="#8c8c8c"/><circle cx="55.5" cy="27.500" r="1.500" fill="#8c8c8c"/><circle cx="59.5" cy="27.500" r="1.500" fill="#8c8c8c"/></svg></div>
<div class="mn s" style="left:600px">AJ65SBT
<span>B1-32DT</span></div>
<div class="st s" style="left:672px">站号9</div>
<div class="dr" style="left:706px"></div>
<div class="a" style="left:676px;top:890px;width:64px;height:32px"><svg width="64" height="32" viewBox="0 0 64 32"><rect x="1" y="1" width="62" height="30" fill="#666" stroke="#000" stroke-width="2"/><rect x="2" y="2" width="60" height="1" fill="#787878"/><rect x="2" y="25" width="60" height="5" fill="#535353"/><rect x="5" y="5" width="17" height="1" fill="#cdcdcd"/><rect x="42" y="5" width="13" height="2" fill="#cbcbcb"/><rect x="24" y="10" width="7" height="1" fill="#cdcdcd"/><path d="M2 9.500a3.200 3.200 0 0 1 0 6z" fill="#444"/><path d="M2 9h2.500a3.200 3.200 0 0 1 0 6.400H2z" fill="#484848"/><path d="M62 9h-2.500a3.200 3.200 0 0 0 0 6.400H62z" fill="#484848"/><path d="M8.500 12H22v4l-1 1H8v-2l-2-.5z" fill="#cbcbcb"/><path d="M24 12h18v5H25l-1-1z" fill="#cbcbcb"/><path d="M42 12h14l3 3.500v1.500H45v-1.800h-3z" fill="#c0453a"/><circle cx="6.4" cy="23.500" r="1.500" fill="#9a9a9a"/><circle cx="10.4" cy="23.500" r="1.500" fill="#9a9a9a"/><circle cx="14.5" cy="23.500" r="1.500" fill="#9a9a9a"/><circle cx="18.5" cy="23.500" r="1.500" fill="#9a9a9a"/><circle cx="25.5" cy="23.500" r="1.500" fill="#9a9a9a"/><circle cx="29.5" cy="23.500" r="1.500" fill="#9a9a9a"/><circle cx="33.5" cy="23.500" r="1.500" fill="#9a9a9a"/><circle cx="37.5" cy="23.500" r="1.500" fill="#9a9a9a"/><circle cx="41.5" cy="23.500" r="1.500" fill="#9a9a9a"/><circle cx="45.5" cy="23.500" r="1.500" fill="#9a9a9a"/><circle cx="49.5" cy="23.500" r="1.500" fill="#9a9a9a"/><circle cx="53.5" cy="23.500" r="1.500" fill="#9a9a9a"/><circle cx="57.5" cy="23.500" r="1.500" fill="#9a9a9a"/><circle cx="8.5" cy="27.500" r="1.500" fill="#8c8c8c"/><circle cx="12.5" cy="27.500" r="1.500" fill="#8c8c8c"/><circle cx="16.5" cy="27.500" r="1.500" fill="#8c8c8c"/><circle cx="27.5" cy="27.500" r="1.500" fill="#8c8c8c"/><circle cx="31.5" cy="27.500" r="1.500" fill="#8c8c8c"/><circle cx="35.5" cy="27.500" r="1.500" fill="#8c8c8c"/><circle cx="39.5" cy="27.500" r="1.500" fill="#8c8c8c"/><circle cx="43.5" cy="27.500" r="1.500" fill="#8c8c8c"/><circle cx="47.5" cy="27.500" r="1.500" fill="#8c8c8c"/><circle cx="51.5" cy="27.500" r="1.500" fill="#8c8c8c"/><circle cx="55.5" cy="27.500" r="1.500" fill="#8c8c8c"/><circle cx="59.5" cy="27.500" r="1.500" fill="#8c8c8c"/></svg></div>
<div class="mn s" style="left:672px">AJ65SBT
<span>B1-32DT</span></div>
<div class="st s" style="left:744px">站号10</div>
<div class="dr" style="left:778px"></div>
<div class="a" style="left:748px;top:890px;width:64px;height:32px"><svg width="64" height="32" viewBox="0 0 64 32"><rect x="1" y="1" width="62" height="30" fill="#666" stroke="#000" stroke-width="2"/><rect x="2" y="2" width="60" height="1" fill="#787878"/><rect x="2" y="25" width="60" height="5" fill="#535353"/><rect x="5" y="5" width="17" height="1" fill="#cdcdcd"/><rect x="42" y="5" width="13" height="2" fill="#cbcbcb"/><rect x="24" y="10" width="7" height="1" fill="#cdcdcd"/><path d="M2 9.500a3.200 3.200 0 0 1 0 6z" fill="#444"/><path d="M2 9h2.500a3.200 3.200 0 0 1 0 6.400H2z" fill="#484848"/><path d="M62 9h-2.500a3.200 3.200 0 0 0 0 6.400H62z" fill="#484848"/><path d="M8.500 12H22v4l-1 1H8v-2l-2-.5z" fill="#cbcbcb"/><path d="M24 12h18v5H25l-1-1z" fill="#cbcbcb"/><path d="M42 12h14l3 3.500v1.500H45v-1.800h-3z" fill="#c0453a"/><circle cx="6.4" cy="23.500" r="1.500" fill="#9a9a9a"/><circle cx="10.4" cy="23.500" r="1.500" fill="#9a9a9a"/><circle cx="14.5" cy="23.500" r="1.500" fill="#9a9a9a"/><circle cx="18.5" cy="23.500" r="1.500" fill="#9a9a9a"/><circle cx="25.5" cy="23.500" r="1.500" fill="#9a9a9a"/><circle cx="29.5" cy="23.500" r="1.500" fill="#9a9a9a"/><circle cx="33.5" cy="23.500" r="1.500" fill="#9a9a9a"/><circle cx="37.5" cy="23.500" r="1.500" fill="#9a9a9a"/><circle cx="41.5" cy="23.500" r="1.500" fill="#9a9a9a"/><circle cx="45.5" cy="23.500" r="1.500" fill="#9a9a9a"/><circle cx="49.5" cy="23.500" r="1.500" fill="#9a9a9a"/><circle cx="53.5" cy="23.500" r="1.500" fill="#9a9a9a"/><circle cx="57.5" cy="23.500" r="1.500" fill="#9a9a9a"/><circle cx="8.5" cy="27.500" r="1.500" fill="#8c8c8c"/><circle cx="12.5" cy="27.500" r="1.500" fill="#8c8c8c"/><circle cx="16.5" cy="27.500" r="1.500" fill="#8c8c8c"/><circle cx="27.5" cy="27.500" r="1.500" fill="#8c8c8c"/><circle cx="31.5" cy="27.500" r="1.500" fill="#8c8c8c"/><circle cx="35.5" cy="27.500" r="1.500" fill="#8c8c8c"/><circle cx="39.5" cy="27.500" r="1.500" fill="#8c8c8c"/><circle cx="43.5" cy="27.500" r="1.500" fill="#8c8c8c"/><circle cx="47.5" cy="27.500" r="1.500" fill="#8c8c8c"/><circle cx="51.5" cy="27.500" r="1.500" fill="#8c8c8c"/><circle cx="55.5" cy="27.500" r="1.500" fill="#8c8c8c"/><circle cx="59.5" cy="27.500" r="1.500" fill="#8c8c8c"/></svg></div>
<div class="mn s" style="left:744px">AJ65SBT
<span>B1-32DT</span></div>
<div class="st s" style="left:816px">站号11</div>
<div class="dr" style="left:850px"></div>
<div class="a" style="left:820px;top:890px;width:64px;height:32px"><svg width="64" height="32" viewBox="0 0 64 32"><rect x="1" y="1" width="62" height="30" fill="#666" stroke="#000" stroke-width="2"/><rect x="2" y="2" width="60" height="1" fill="#787878"/><rect x="2" y="25" width="60" height="5" fill="#535353"/><rect x="5" y="5" width="17" height="1" fill="#cdcdcd"/><rect x="42" y="5" width="13" height="2" fill="#cbcbcb"/><rect x="24" y="10" width="7" height="1" fill="#cdcdcd"/><path d="M2 9.500a3.200 3.200 0 0 1 0 6z" fill="#444"/><path d="M2 9h2.500a3.200 3.200 0 0 1 0 6.400H2z" fill="#484848"/><path d="M62 9h-2.500a3.200 3.200 0 0 0 0 6.400H62z" fill="#484848"/><path d="M8.500 12H22v4l-1 1H8v-2l-2-.5z" fill="#cbcbcb"/><path d="M24 12h18v5H25l-1-1z" fill="#cbcbcb"/><path d="M42 12h14l3 3.500v1.500H45v-1.800h-3z" fill="#c0453a"/><circle cx="6.4" cy="23.500" r="1.500" fill="#9a9a9a"/><circle cx="10.4" cy="23.500" r="1.500" fill="#9a9a9a"/><circle cx="14.5" cy="23.500" r="1.500" fill="#9a9a9a"/><circle cx="18.5" cy="23.500" r="1.500" fill="#9a9a9a"/><circle cx="25.5" cy="23.500" r="1.500" fill="#9a9a9a"/><circle cx="29.5" cy="23.500" r="1.500" fill="#9a9a9a"/><circle cx="33.5" cy="23.500" r="1.500" fill="#9a9a9a"/><circle cx="37.5" cy="23.500" r="1.500" fill="#9a9a9a"/><circle cx="41.5" cy="23.500" r="1.500" fill="#9a9a9a"/><circle cx="45.5" cy="23.500" r="1.500" fill="#9a9a9a"/><circle cx="49.5" cy="23.500" r="1.500" fill="#9a9a9a"/><circle cx="53.5" cy="23.500" r="1.500" fill="#9a9a9a"/><circle cx="57.5" cy="23.500" r="1.500" fill="#9a9a9a"/><circle cx="8.5" cy="27.500" r="1.500" fill="#8c8c8c"/><circle cx="12.5" cy="27.500" r="1.500" fill="#8c8c8c"/><circle cx="16.5" cy="27.500" r="1.500" fill="#8c8c8c"/><circle cx="27.5" cy="27.500" r="1.500" fill="#8c8c8c"/><circle cx="31.5" cy="27.500" r="1.500" fill="#8c8c8c"/><circle cx="35.5" cy="27.500" r="1.500" fill="#8c8c8c"/><circle cx="39.5" cy="27.500" r="1.500" fill="#8c8c8c"/><circle cx="43.5" cy="27.500" r="1.500" fill="#8c8c8c"/><circle cx="47.5" cy="27.500" r="1.500" fill="#8c8c8c"/><circle cx="51.5" cy="27.500" r="1.500" fill="#8c8c8c"/><circle cx="55.5" cy="27.500" r="1.500" fill="#8c8c8c"/><circle cx="59.5" cy="27.500" r="1.500" fill="#8c8c8c"/></svg></div>
<div class="mn s" style="left:816px">AJ65SBT
<span>B1-32DT</span></div>
<div class="st s" style="left:888px">站号12</div>
<div class="dr" style="left:922px"></div>
<div class="a" style="left:892px;top:890px;width:64px;height:32px"><svg width="64" height="32" viewBox="0 0 64 32"><rect x="1" y="1" width="62" height="30" fill="#666" stroke="#000" stroke-width="2"/><rect x="2" y="2" width="60" height="1" fill="#787878"/><rect x="2" y="25" width="60" height="5" fill="#535353"/><rect x="5" y="5" width="17" height="1" fill="#cdcdcd"/><rect x="42" y="5" width="13" height="2" fill="#cbcbcb"/><rect x="24" y="10" width="7" height="1" fill="#cdcdcd"/><path d="M2 9.500a3.200 3.200 0 0 1 0 6z" fill="#444"/><path d="M2 9h2.500a3.200 3.200 0 0 1 0 6.400H2z" fill="#484848"/><path d="M62 9h-2.500a3.200 3.200 0 0 0 0 6.400H62z" fill="#484848"/><path d="M8.500 12H22v4l-1 1H8v-2l-2-.5z" fill="#cbcbcb"/><path d="M24 12h18v5H25l-1-1z" fill="#cbcbcb"/><path d="M42 12h14l3 3.500v1.500H45v-1.800h-3z" fill="#c0453a"/><circle cx="6.4" cy="23.500" r="1.500" fill="#9a9a9a"/><circle cx="10.4" cy="23.500" r="1.500" fill="#9a9a9a"/><circle cx="14.5" cy="23.500" r="1.500" fill="#9a9a9a"/><circle cx="18.5" cy="23.500" r="1.500" fill="#9a9a9a"/><circle cx="25.5" cy="23.500" r="1.500" fill="#9a9a9a"/><circle cx="29.5" cy="23.500" r="1.500" fill="#9a9a9a"/><circle cx="33.5" cy="23.500" r="1.500" fill="#9a9a9a"/><circle cx="37.5" cy="23.500" r="1.500" fill="#9a9a9a"/><circle cx="41.5" cy="23.500" r="1.500" fill="#9a9a9a"/><circle cx="45.5" cy="23.500" r="1.500" fill="#9a9a9a"/><circle cx="49.5" cy="23.500" r="1.500" fill="#9a9a9a"/><circle cx="53.5" cy="23.500" r="1.500" fill="#9a9a9a"/><circle cx="57.5" cy="23.500" r="1.500" fill="#9a9a9a"/><circle cx="8.5" cy="27.500" r="1.500" fill="#8c8c8c"/><circle cx="12.5" cy="27.500" r="1.500" fill="#8c8c8c"/><circle cx="16.5" cy="27.500" r="1.500" fill="#8c8c8c"/><circle cx="27.5" cy="27.500" r="1.500" fill="#8c8c8c"/><circle cx="31.5" cy="27.500" r="1.500" fill="#8c8c8c"/><circle cx="35.5" cy="27.500" r="1.500" fill="#8c8c8c"/><circle cx="39.5" cy="27.500" r="1.500" fill="#8c8c8c"/><circle cx="43.5" cy="27.500" r="1.500" fill="#8c8c8c"/><circle cx="47.5" cy="27.500" r="1.500" fill="#8c8c8c"/><circle cx="51.5" cy="27.500" r="1.500" fill="#8c8c8c"/><circle cx="55.5" cy="27.500" r="1.500" fill="#8c8c8c"/><circle cx="59.5" cy="27.500" r="1.500" fill="#8c8c8c"/></svg></div>
<div class="mn s" style="left:888px">AJ65SBT
<span>B1-32DT</span></div>
<div class="st s" style="left:960px">站号13</div>
<div class="dr" style="left:994px"></div>
<div class="a" style="left:964px;top:890px;width:64px;height:32px"><svg width="64" height="32" viewBox="0 0 64 32"><rect x="1" y="1" width="62" height="30" fill="#666" stroke="#000" stroke-width="2"/><rect x="2" y="2" width="60" height="1" fill="#787878"/><rect x="2" y="25" width="60" height="5" fill="#535353"/><rect x="5" y="5" width="17" height="1" fill="#cdcdcd"/><rect x="42" y="5" width="13" height="2" fill="#cbcbcb"/><rect x="24" y="10" width="7" height="1" fill="#cdcdcd"/><path d="M2 9.500a3.200 3.200 0 0 1 0 6z" fill="#444"/><path d="M2 9h2.500a3.200 3.200 0 0 1 0 6.400H2z" fill="#484848"/><path d="M62 9h-2.500a3.200 3.200 0 0 0 0 6.400H62z" fill="#484848"/><path d="M8.500 12H22v4l-1 1H8v-2l-2-.5z" fill="#cbcbcb"/><path d="M24 12h32l3 3.500v1.500H25l-1-1z" fill="#cbcbcb"/><circle cx="6.4" cy="23.500" r="1.500" fill="#9a9a9a"/><circle cx="10.4" cy="23.500" r="1.500" fill="#9a9a9a"/><circle cx="14.5" cy="23.500" r="1.500" fill="#9a9a9a"/><circle cx="18.5" cy="23.500" r="1.500" fill="#9a9a9a"/><circle cx="25.5" cy="23.500" r="1.500" fill="#9a9a9a"/><circle cx="29.5" cy="23.500" r="1.500" fill="#9a9a9a"/><circle cx="33.5" cy="23.500" r="1.500" fill="#9a9a9a"/><circle cx="37.5" cy="23.500" r="1.500" fill="#9a9a9a"/><circle cx="41.5" cy="23.500" r="1.500" fill="#9a9a9a"/><circle cx="45.5" cy="23.500" r="1.500" fill="#9a9a9a"/><circle cx="49.5" cy="23.500" r="1.500" fill="#9a9a9a"/><circle cx="53.5" cy="23.500" r="1.500" fill="#9a9a9a"/><circle cx="57.5" cy="23.500" r="1.500" fill="#9a9a9a"/><circle cx="8.5" cy="27.500" r="1.500" fill="#8c8c8c"/><circle cx="12.5" cy="27.500" r="1.500" fill="#8c8c8c"/><circle cx="16.5" cy="27.500" r="1.500" fill="#8c8c8c"/><circle cx="27.5" cy="27.500" r="1.500" fill="#8c8c8c"/><circle cx="31.5" cy="27.500" r="1.500" fill="#8c8c8c"/><circle cx="35.5" cy="27.500" r="1.500" fill="#8c8c8c"/><circle cx="39.5" cy="27.500" r="1.500" fill="#8c8c8c"/><circle cx="43.5" cy="27.500" r="1.500" fill="#8c8c8c"/><circle cx="47.5" cy="27.500" r="1.500" fill="#8c8c8c"/><circle cx="51.5" cy="27.500" r="1.500" fill="#8c8c8c"/><circle cx="55.5" cy="27.500" r="1.500" fill="#8c8c8c"/><circle cx="59.5" cy="27.500" r="1.500" fill="#8c8c8c"/></svg></div>
<div class="mn s" style="left:960px">AJ65SBT
<span>B1-32D</span></div>
<div class="a" style="left:96px;top:1004px;width:1328px;height:19px;background:#f0f0f0"><div class="a" style="left:21px;top:0;width:41px;height:19px;background:#cdcdcd"></div><svg class="a" style="left:6px;top:5px" width="8" height="10"><path d="M6 1L2 5l4 4" fill="none" stroke="#505050" stroke-width="2"/></svg><svg class="a" style="left:1313px;top:5px" width="8" height="10"><path d="M2 1l4 4-4 4" fill="none" stroke="#505050" stroke-width="2"/></svg></div>
<div class="a" style="left:1432px;top:56px;width:466px;height:31px;background:linear-gradient(180deg,#f6f6fb 0,#e9e9f3 45%,#d2d2e3 70%,#a3a3c4 100%)"></div>
<div class="a" style="left:1432px;top:87px;width:466px;height:1px;background:#646464"></div>
<div class="a" style="left:1437px;top:61px;width:2px;height:23px;background:repeating-linear-gradient(180deg,#4a4a6a 0 2px,transparent 2px 4px)"></div>
<div class="a ui" style="left:1445px;top:61px;line-height:20px">模块一览</div>
<svg class="a" style="left:1893px;top:65px" width="8" height="10"><path d="M1 1l8 8M9 1L1 9" stroke="#000" stroke-width="1.5"/></svg>
<div class="a" style="left:1432px;top:88px;width:466px;height:28px;background:#f0f0f0;border-left:1px solid #7a7a7a"></div>
<div class="a" style="left:1433px;top:114px;width:465px;height:2px;background:#fbfbfd"></div>
<div class="a ui" style="left:1434px;top:89px;width:98px;height:27px;background:#f8f8fa;line-height:26px;padding-left:5px;padding-top:2px">CC-Link选择</div>
<div class="a" style="left:1532px;top:91px;width:1px;height:23px;background:#7c7c7c"></div><div class="a" style="left:1533px;top:91px;width:1px;height:23px;background:#fff"></div>
<div class="a ui" style="left:1534px;top:93px;width:70px;height:21px;line-height:21px;padding-left:4px">搜索模块</div>
<div class="a" style="left:1603px;top:93px;width:1px;height:21px;background:#7c7c7c"></div><div class="a" style="left:1604px;top:93px;width:1px;height:21px;background:#fff"></div>
<div class="a ui" style="left:1605px;top:93px;width:56px;height:21px;line-height:21px;padding-left:5px">收藏夹</div>
<div class="a" style="left:1660px;top:93px;width:1px;height:21px;background:#7c7c7c"></div><div class="a" style="left:1661px;top:93px;width:1px;height:21px;background:#fff"></div>
<div class="a" style="left:1433px;top:116px;width:465px;height:26px;background:linear-gradient(180deg,#f8f8fc 0,#e8e8f2 45%,#cfcfe1 72%,#a0a0c2 100%)"></div>
<div class="a" style="left:1433px;top:142px;width:465px;height:1px;background:#8c8ca0"></div>
<div class="a" style="left:1433px;top:143px;width:465px;height:1px;background:#fff"></div>
<div class="a" style="left:1437px;top:118px;width:22px;height:22px;border:1px solid #7a6a98;background:linear-gradient(180deg,#ffd08a,#ffb050 60%,#ffa03c)"><svg class="a" style="left:0;top:0" width="20" height="20"><g fill="#fff" stroke="#2a2a3a" stroke-width="1"><rect x="2.500" y="3.500" width="6" height="6"/><rect x="2.500" y="13.500" width="6" height="6"/></g><path d="M4 6.500h3M5.500 5v3M4 16.500h3M5.500 15v3M9 6.500h8M9 16.500h8" stroke="#1a1a2a" fill="none"/><path d="M14.500 9v1M14.500 11v1M14.500 13v1M5.500 11v1" stroke="#1a1a2a"/></svg></div>
<svg class="a" style="left:1461px;top:120px" width="18" height="19"><text x=".5" y="9" font-family="Liberation Sans,sans-serif" font-size="9.500" font-weight="bold" fill="#000" stroke="#000" stroke-width=".4">A</text><text x=".8" y="17.500" font-family="Liberation Sans,sans-serif" font-size="9.500" font-weight="bold" fill="#000" stroke="#000" stroke-width=".4">Z</text><path d="M12 2v15" stroke="#e81010" stroke-width="1.600"/><path d="M8.400 12.500L12 17.200l3.600-4.700" fill="none" stroke="#e81010" stroke-width="1.800"/></svg>
<div class="a" style="left:1483px;top:122px;width:1px;height:15px;background:#5c5c8c"></div><div class="a" style="left:1484px;top:122px;width:1px;height:15px;background:#f4f4fa"></div>
<svg class="a" style="left:1489px;top:119px" width="18" height="20"><rect x="1.500" y="3.500" width="6" height="6" fill="#fff" stroke="#2a2a3a"/><path d="M3 6.500h3" stroke="#000"/><path d="M8 6.500h8.500M9.500 6.500v11h7M9.500 9.500h7" fill="none" stroke="#20204a"/><path d="M11 11.500h6" stroke="#e81010" stroke-width="1.200"/><path d="M11.500 12.500h5l-2.500 3.300z" fill="#e81010"/></svg>
<div class="a" style="left:1509px;top:118px;width:22px;height:22px;border:1px solid #7a6a98;background:linear-gradient(180deg,#ffd08a,#ffb050 60%,#ffa03c)"><svg class="a" style="left:0;top:0" width="20" height="20"><g fill="#fff" stroke="#2a2a3a"><rect x="2.500" y="3.500" width="6" height="6"/><rect x="2.500" y="11.500" width="6" height="6"/></g><path d="M4 6.500h3M5.500 5v3M4 14.500h3M5.500 13v3M9 6.500h8M9 14.500h8" stroke="#1a1a2a" fill="none"/><path d="M12 12.300h5.400l-2.700-4z" fill="#e81010"/><path d="M11.500 12.500h6.500" stroke="#e81010"/></svg></div>
<div class="a" style="left:1533px;top:122px;width:1px;height:15px;background:#5c5c8c"></div><div class="a" style="left:1534px;top:122px;width:1px;height:15px;background:#f4f4fa"></div>
<svg class="a" style="left:1539px;top:120px" width="18" height="18"><path d="M8.500 1.500l2.100 5.200 5.400.3-4.200 3.500 1.400 5.300-4.700-3-4.700 3 1.400-5.300L1 7l5.400-.3z" fill="#c6c6d6" stroke="#b6b6ca" stroke-width=".8"/></svg>
<svg class="a" style="left:1561px;top:120px" width="18" height="18"><path d="M1.500 6.500h5v5h9v5h-14z" fill="#c8c8d8" stroke="#b2b2c6"/><path d="M11.500 2v8M7.500 6h8" stroke="#bcbcd0" stroke-width="3"/></svg>
<svg class="a" style="left:1583px;top:121px" width="19" height="16"><path d="M2.500 2l14 13M16.500 1.500L2.500 14.500" stroke="#b4b4c6" stroke-width="2.800"/></svg>
<div class="a" style="left:1432px;top:143px;width:1px;height:714px;background:#585858"></div>
<div class="a" style="left:1433px;top:144px;width:1px;height:713px;background:#a4a4ac"></div>
<div class="a" style="left:1434px;top:144px;width:1px;height:713px;background:#ececf4"></div>
<div class="a s" style="left:1435px;top:144px;width:450px;height:713px;background:#d0d4e8;overflow:hidden">
<div class="tr" style="top:0px"><b class="p" style="left:2px"></b><i style="left:18px">通用CC-Link模块</i></div>
<div class="tr" style="top:21px"><s style="left:0px"></s><b class="m" style="left:2px"></b><i style="left:18px">CC-Link设备(三菱电机)</i></div>
<div class="tr" style="top:42px"><s style="left:14px"></s><b class="p" style="left:16px"></b><i style="left:32px">主站<em>・</em>本地站模块</i></div>
<div class="tr" style="top:63px"><s style="left:14px"></s><b class="p" style="left:16px"></b><i style="left:32px">主站<em>・</em>智能设备模块</i></div>
<div class="tr" style="top:84px"><s style="left:14px"></s><b class="p" style="left:16px"></b><i style="left:32px">输入模块(螺旋端子排类型)</i></div>
<div class="tr" style="top:105px"><s style="left:14px"></s><b class="p" style="left:16px"></b><i style="left:32px">输入模块(螺旋/双片端子排类型)</i></div>
<div class="tr" style="top:126px"><s style="left:14px"></s><b class="p" style="left:16px"></b><i style="left:32px">输入模块(螺旋/双片端子排防尘类型)</i></div>
<div class="tr" style="top:147px"><s style="left:14px"></s><b class="p" style="left:16px"></b><i style="left:32px">输入模块(弹簧夹端子台类型)</i></div>
<div class="tr" style="top:168px"><s style="left:14px"></s><b class="p" style="left:16px"></b><i style="left:32px">输入模块(传感器连接器类型(e-CON))</i></div>
<div class="tr" style="top:189px"><s style="left:14px"></s><b class="p" style="left:16px"></b><i style="left:32px">输入模块(单触式连接器类型)</i></div>
<div class="tr" style="top:210px"><s style="left:14px"></s><b class="p" style="left:16px"></b><i style="left:32px">输入模块(40针连接器类型(FCN连接器类型))</i></div>
<div class="tr" style="top:231px"><s style="left:14px"></s><b class="p" style="left:16px"></b><i style="left:32px">输入模块(防水连接器类型)</i></div>
<div class="tr" style="top:252px"><s style="left:14px"></s><b class="p" style="left:16px"></b><i style="left:32px">输入模块(内置I/O适配器)</i></div>
<div class="tr" style="top:273px"><s style="left:14px"></s><b class="p" style="left:16px"></b><i style="left:32px">输出模块(螺旋端子排类型)</i></div>
<div class="tr" style="top:294px"><s style="left:14px"></s><b class="p" style="left:16px"></b><i style="left:32px">输出模块(螺旋/双片端子排类型)</i></div>
<div class="tr" style="top:315px"><s style="left:14px"></s><b class="p" style="left:16px"></b><i style="left:32px">输出模块(螺旋/双片端子排防尘类型)</i></div>
<div class="tr" style="top:336px"><s style="left:14px"></s><b class="p" style="left:16px"></b><i style="left:32px">输出模块(弹簧夹端子台类型)</i></div>
<div class="tr" style="top:357px"><s style="left:14px"></s><b class="p" style="left:16px"></b><i style="left:32px">输出模块(传感器连接器类型(e-CON))</i></div>
<div class="tr" style="top:378px"><s style="left:14px"></s><b class="p" style="left:16px"></b><i style="left:32px">输出模块(单触式连接器类型)</i></div>
<div class="tr" style="top:399px"><s style="left:14px"></s><b class="p" style="left:16px"></b><i style="left:32px">输出模块(40针连接器类型(FCN连接器类型))</i></div>
<div class="tr" style="top:420px"><s style="left:14px"></s><b class="p" style="left:16px"></b><i style="left:32px">输出模块(防水连接器类型)</i></div>
<div class="tr" style="top:441px"><s style="left:14px"></s><b class="p" style="left:16px"></b><i style="left:32px">输出模块(内置I/O适配器)</i></div>
<div class="tr" style="top:462px"><s style="left:14px"></s><b class="p" style="left:16px"></b><i style="left:32px">I/O混合模块(螺旋端子排类型)</i></div>
<div class="tr" style="top:483px"><s style="left:14px"></s><b class="p" style="left:16px"></b><i style="left:32px">I/O混合模块(螺旋/双片端子排类型)</i></div>
<div class="tr" style="top:504px"><s style="left:14px"></s><b class="p" style="left:16px"></b><i style="left:32px">I/O混合模块(螺旋/双片端子排防尘类型)</i></div>
<div class="tr" style="top:525px"><s style="left:14px"></s><b class="p" style="left:16px"></b><i style="left:32px">I/O混合模块(弹簧夹端子台类型)</i></div>
<div class="tr" style="top:546px"><s style="left:14px"></s><b class="p" style="left:16px"></b><i style="left:32px">I/O混合模块(传感器连接器类型(e-CON))</i></div>
<div class="tr" style="top:567px"><s style="left:14px"></s><b class="p" style="left:16px"></b><i style="left:32px">I/O混合模块(单触式连接器类型)</i></div>
<div class="tr" style="top:588px"><s style="left:14px"></s><b class="p" style="left:16px"></b><i style="left:32px">I/O混合模块(40针连接器类型(FCN连接器类型))</i></div>
<div class="tr" style="top:609px"><s style="left:14px"></s><b class="p" style="left:16px"></b><i style="left:32px">I/O混合模块(防水连接器类型)</i></div>
<div class="tr" style="top:630px"><s style="left:14px"></s><b class="p" style="left:16px"></b><i style="left:32px">I/O混合模块(内置I/O适配器)</i></div>
<div class="tr" style="top:651px"><s style="left:14px"></s><b class="p" style="left:16px"></b><i style="left:32px">模拟输入模块(电压输入)</i></div>
<div class="tr" style="top:672px"><s style="left:14px"></s><b class="p" style="left:16px"></b><i style="left:32px">模拟输入模块(电流输入)</i></div>
<div class="tr" style="top:693px"><s style="left:14px"></s><b class="p" style="left:16px"></b><i style="left:32px">模拟输入模块(电压/电流输入)</i></div>
</div>
<div class="a" style="left:1885px;top:144px;width:13px;height:713px;background:#f0f0f0"><div class="a" style="left:1px;top:21px;width:12px;height:245px;background:#cdcdcd"></div><svg class="a" style="left:4px;top:7px" width="10" height="8"><path d="M1 6l4-4 4 4" fill="none" stroke="#505050" stroke-width="2"/></svg><svg class="a" style="left:4px;top:698px" width="10" height="8"><path d="M1 2l4 4 4-4" fill="none" stroke="#505050" stroke-width="2"/></svg></div>
<div class="a" style="left:1432px;top:857px;width:466px;height:4px;background:#fcfcfe"></div>
<div class="a" style="left:1432px;top:861px;width:466px;height:2px;background:#ebebf2"></div>
<div class="a" style="left:1432px;top:863px;width:466px;height:164px;background:#f0f0f0;border-left:2px solid #6a6a6a;border-top:2px solid #6a6a6a"></div>
<div class="a" style="left:0;top:1024px;width:1432px;height:3px;background:#f0f0f0"></div>
<div class="a" style="left:0;top:1026px;width:1898px;height:1px;background:#dadada"></div>
<div class="a" style="left:0;top:1027px;width:1898px;height:20px;background:linear-gradient(90deg,#26393f 0,#253a44 900px,#1c2a42 1500px,#1a2740 1898px);overflow:hidden">
<svg class="a" style="left:9px;top:16px" width="22" height="22" viewBox="0 0 22 22"><path d="M0 3.500l9-1.300v8.300H0zM10.500 2l11-1.700V10.500h-11zM0 12h9v8.300l-9-1.300zM10.500 12h11v10.200l-11-1.600z" fill="#fff"/></svg>
<div class="a ui" style="left:50px;top:0;width:430px;height:50px;background:#f3f3f3;color:#1a1a1a"><svg class="a" style="left:20px;top:14px" width="24" height="24"><circle cx="8" cy="8" r="6" fill="none" stroke="#1a1a1a" stroke-width="1.500"/><path d="M12.500 12.500l6 6" stroke="#1a1a1a" stroke-width="1.500"/></svg><span class="a" style="left:49px;top:13px;font-size:19px;line-height:28px">在这里输入你要搜索的内容</span></div>
<div class="a" style="left:852px;top:0;width:61px;height:50px;background:#47555f"></div>
<svg class="a" style="left:498px;top:14px" width="24" height="24"><circle cx="12" cy="12" r="9.500" fill="none" stroke="#fff" stroke-width="2.500"/></svg>
<svg class="a" style="left:558px;top:13px" width="24" height="22"><path d="M1.700 8V1.700h14V8M20 1v16" fill="none" stroke="#fff" stroke-width="1.400"/></svg>
<div class="a" style="left:617px;top:12px;width:26px;height:26px;border-radius:13px;background:#2ecc40"></div><div class="a" style="left:624px;top:18px;width:3px;height:3px;border-radius:2px;background:#1b7a24"></div><div class="a" style="left:633px;top:18px;width:3px;height:3px;border-radius:2px;background:#1b7a24"></div>
<div class="a" style="left:681px;top:13px;width:12px;height:6px;background:#e9a21c;border-radius:1px"></div><div class="a" style="left:681px;top:16px;width:28px;height:20px;background:#ffd257;border-radius:1px"></div>
<div class="a" style="left:742px;top:10px;width:32px;height:32px;border-radius:16px;background:linear-gradient(160deg,#35c9d6 0,#1f9ee0 45%,#0b57a6 100%)"></div>
<div class="a" style="left:806px;top:12px;width:15px;height:28px;background:#1b6b3e;transform:skewY(-9deg)"></div><div class="a" style="left:821px;top:13px;width:12px;height:24px;background:#2aa868;border:1px solid #e8f5ee"></div>
<div class="a" style="left:868px;top:10px;width:29px;height:30px;background:linear-gradient(135deg,#ff4a4a,#e00000)"></div><div class="a" style="left:877px;top:17px;width:15px;height:3px;background:#fff;transform:rotate(-8deg)"></div><div class="a" style="left:883px;top:14px;width:3px;height:12px;background:#fff"></div>
<svg class="a" style="left:1606px;top:14px" width="24" height="20"><path d="M1.700 14V3.800l20-2.600v13" fill="none" stroke="#fff" stroke-width="1.400"/></svg>
<div class="a" style="left:1640px;top:18px;width:1px;height:6px;background:#dfe3ea"></div>
<svg class="a" style="left:1680px;top:17px" width="34" height="8"><path d="M1 7c2-4 5-5.500 8-4.500M24 7l3-6" fill="none" stroke="#fff" stroke-width="1.400"/></svg>
<div class="a" style="left:1729px;top:17px;width:4px;height:4px;background:#fff"></div><div class="a" style="left:1737px;top:17px;width:4px;height:4px;background:#fff"></div><div class="a" style="left:1728px;top:19px;width:15px;height:4px;background:#fff"></div>
<div class="a ui" style="left:1782px;top:4px;color:#fff;line-height:18px;font-size:15px">8:34</div>
<div class="a" style="left:1860px;top:16px;width:20px;height:18px;border:2px solid #fff;border-top-width:4px"></div>
</div>
</body></html>
